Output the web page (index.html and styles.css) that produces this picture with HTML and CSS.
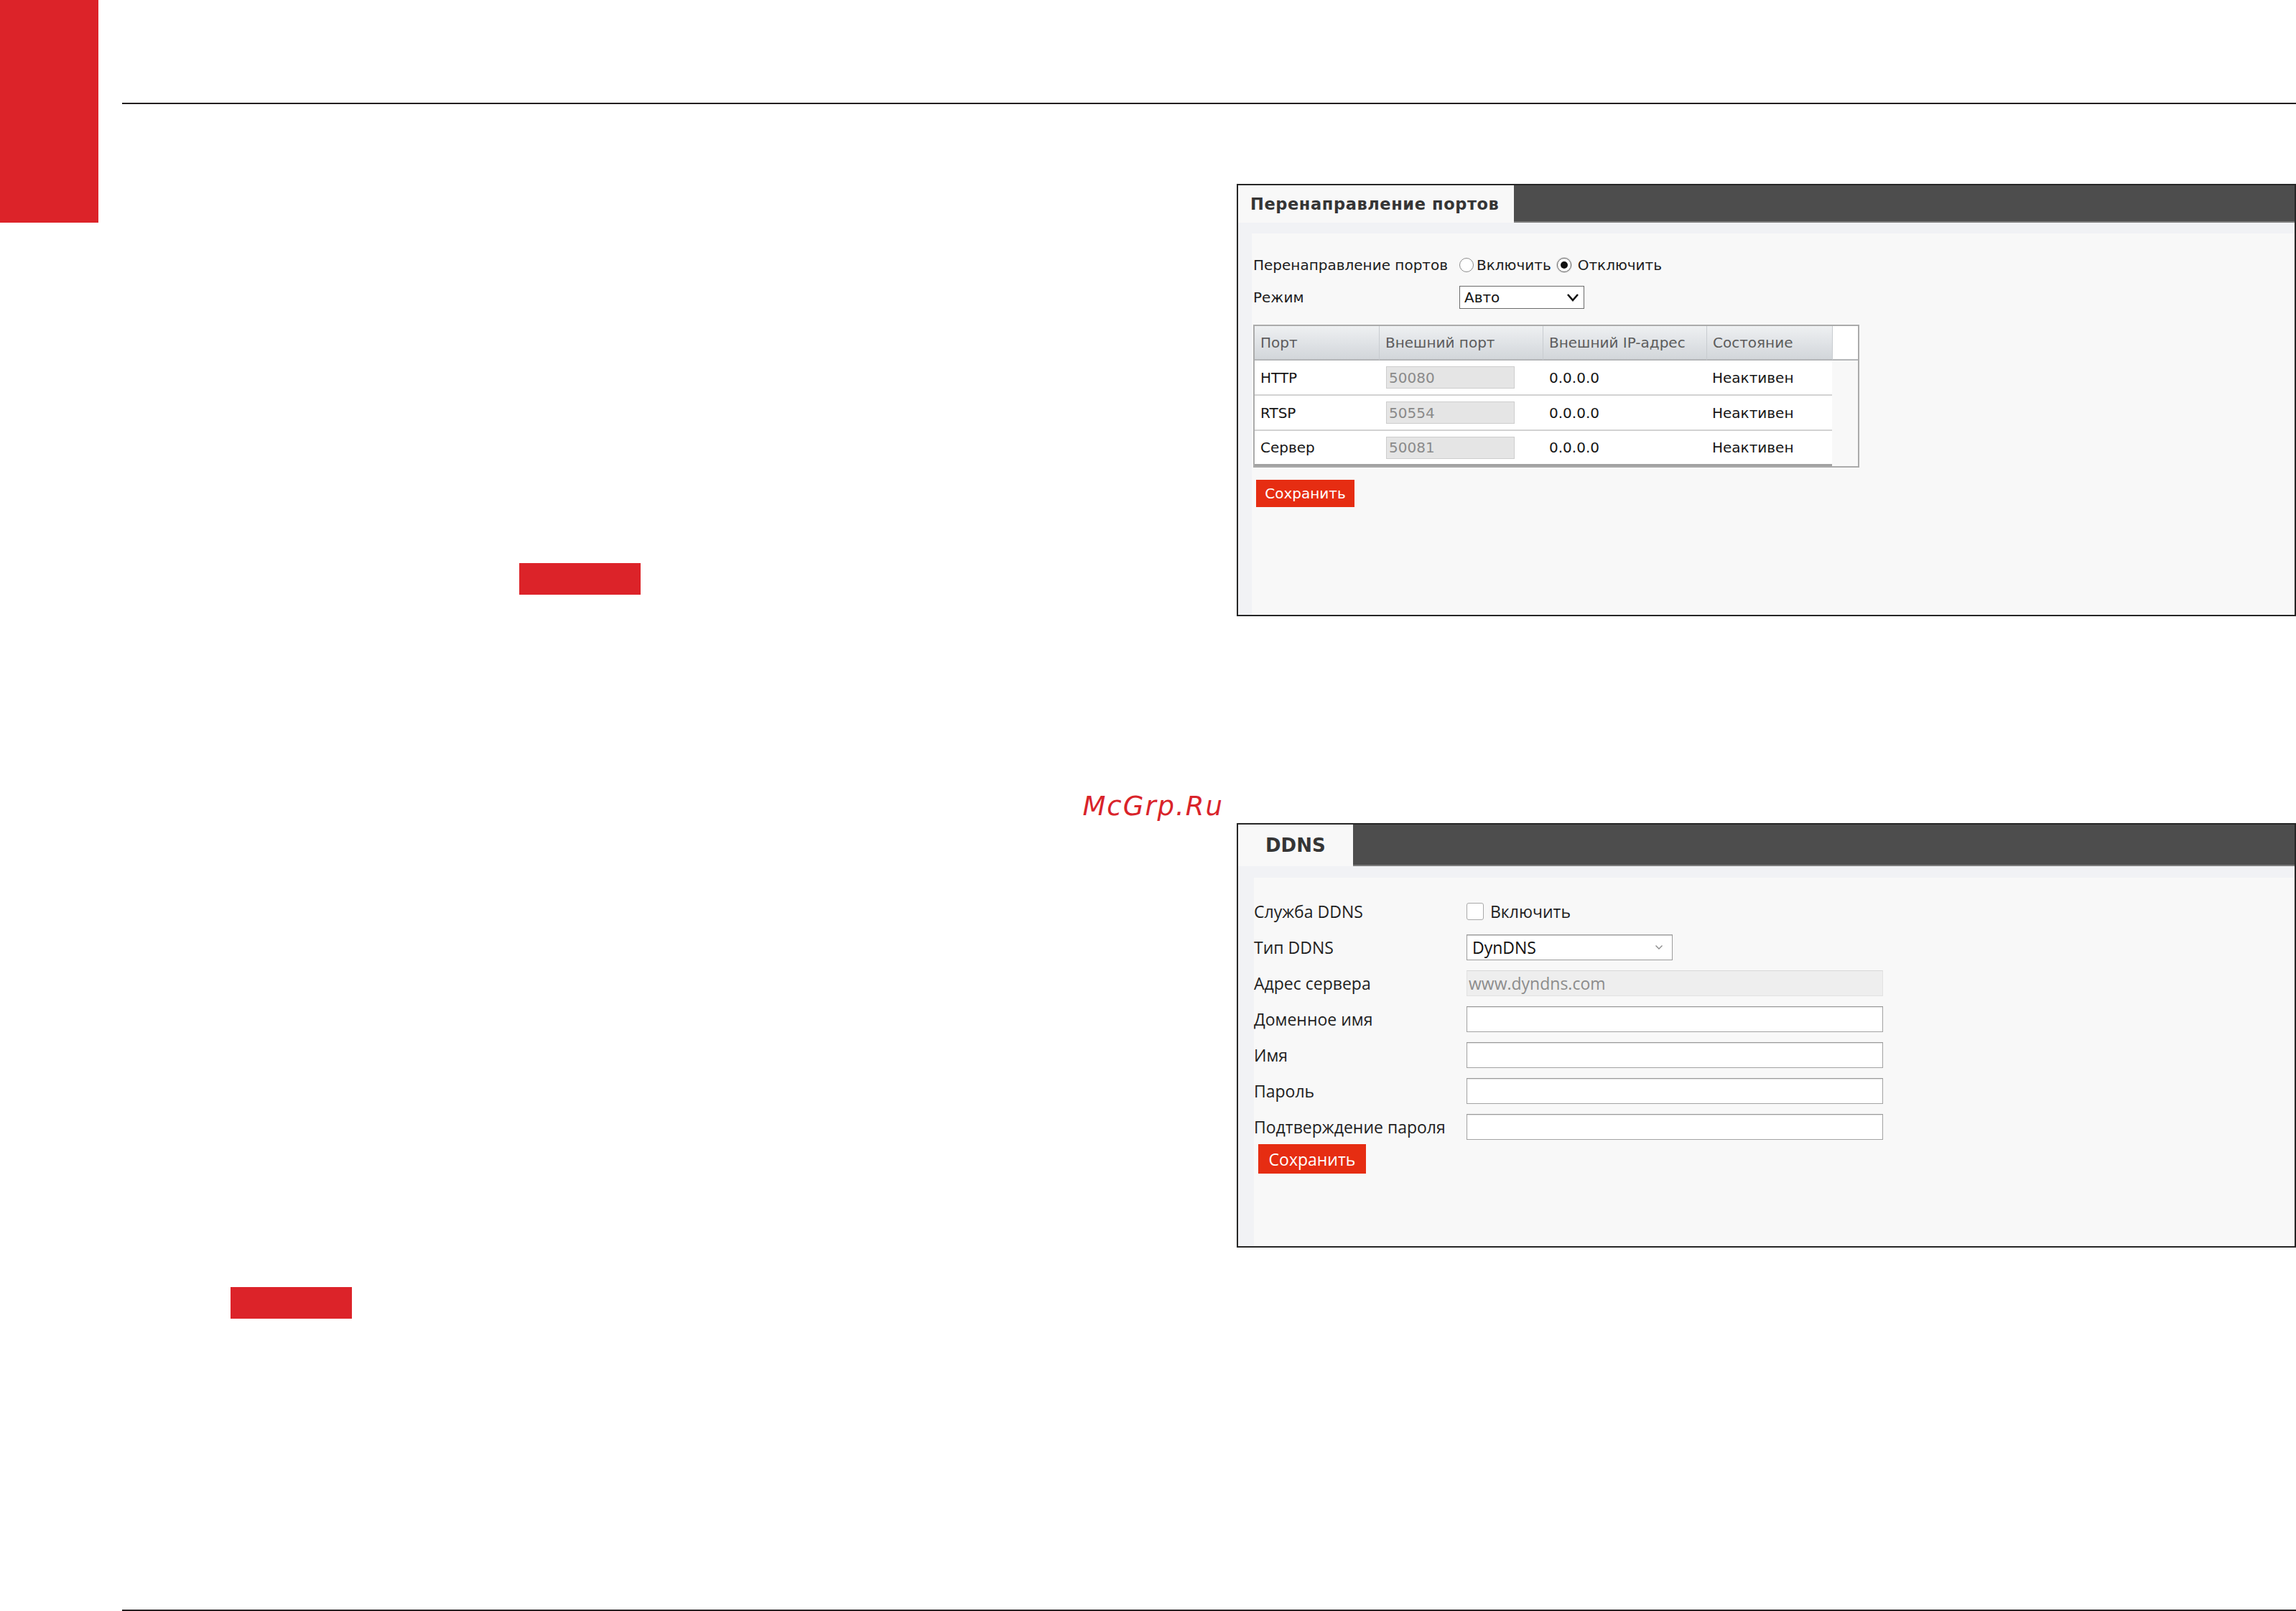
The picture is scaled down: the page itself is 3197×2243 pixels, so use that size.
FILE: index.html
```html
<!DOCTYPE html>
<html lang="ru">
<head>
<meta charset="utf-8">
<title>Перенаправление портов / DDNS</title>
<link rel="stylesheet" href="styles.css">
</head>
<body>
<div class="page">
  <div class="corner"></div>
  <div class="rule rule-top"></div>

  <main class="main">
    <section class="left-col">
      <div class="redact redact-1"></div>
      <div class="watermark">McGrp.Ru</div>
      <div class="redact redact-2"></div>
    </section>

    <section class="right-col">
      <div class="panel panel-ports">
        <div class="panel-head">
          <div class="tab">Перенаправление портов</div>
          <div class="head-bar"></div>
        </div>
        <div class="panel-body">
          <div class="pf-row pf-row-1">
            <span class="pf-label">Перенаправление портов</span>
            <span class="radio"></span>
            <span class="radio-text">Включить</span>
            <span class="radio checked"></span>
            <span class="radio-text">Отключить</span>
          </div>
          <div class="pf-row pf-row-2">
            <span class="pf-label">Режим</span>
            <div class="select-auto">
              <span>Авто</span>
              <svg class="chev-bold" width="18" height="12" viewBox="0 0 18 12"><polyline points="2,2 9,10 16,2" fill="none" stroke="#111" stroke-width="2.6" stroke-linejoin="miter"/></svg>
            </div>
          </div>
          <table class="ports">
            <thead>
              <tr>
                <th class="c1">Порт</th>
                <th class="c2">Внешний порт</th>
                <th class="c3">Внешний IP-адрес</th>
                <th class="c4">Состояние</th>
                <th class="c5"></th>
              </tr>
            </thead>
            <tbody>
              <tr>
                <td class="c1">HTTP</td>
                <td class="c2"><input class="port-input" type="text" value="50080" readonly></td>
                <td class="c3">0.0.0.0</td>
                <td class="c4">Неактивен</td>
                <td class="c5"></td>
              </tr>
              <tr>
                <td class="c1">RTSP</td>
                <td class="c2"><input class="port-input" type="text" value="50554" readonly></td>
                <td class="c3">0.0.0.0</td>
                <td class="c4">Неактивен</td>
                <td class="c5"></td>
              </tr>
              <tr class="last">
                <td class="c1">Сервер</td>
                <td class="c2"><input class="port-input" type="text" value="50081" readonly></td>
                <td class="c3">0.0.0.0</td>
                <td class="c4">Неактивен</td>
                <td class="c5"></td>
              </tr>
            </tbody>
          </table>
          <button class="btn-save btn-save-ports" type="button">Сохранить</button>
        </div>
      </div>

      <div class="panel panel-ddns">
        <div class="panel-head">
          <div class="tab">DDNS</div>
          <div class="head-bar"></div>
        </div>
        <div class="panel-body">
          <div class="dd-row">
            <span class="dd-label">Служба DDNS</span>
            <span class="checkbox"></span>
            <span class="check-text">Включить</span>
          </div>
          <div class="dd-row">
            <span class="dd-label">Тип DDNS</span>
            <div class="select-ddns">
              <span>DynDNS</span>
              <svg class="chev-thin" width="12" height="8" viewBox="0 0 12 8"><polyline points="1.5,1.5 6,6 10.5,1.5" fill="none" stroke="#8a8a8a" stroke-width="1.4"/></svg>
            </div>
          </div>
          <div class="dd-row">
            <span class="dd-label">Адрес сервера</span>
            <input class="dd-input dd-input-disabled" type="text" value="www.dyndns.com" readonly>
          </div>
          <div class="dd-row">
            <span class="dd-label">Доменное имя</span>
            <input class="dd-input" type="text" value="">
          </div>
          <div class="dd-row">
            <span class="dd-label">Имя</span>
            <input class="dd-input" type="text" value="">
          </div>
          <div class="dd-row">
            <span class="dd-label">Пароль</span>
            <input class="dd-input" type="password" value="">
          </div>
          <div class="dd-row">
            <span class="dd-label">Подтверждение пароля</span>
            <input class="dd-input" type="password" value="">
          </div>
          <button class="btn-save btn-save-ddns" type="button">Сохранить</button>
        </div>
      </div>
    </section>
  </main>

  <div class="rule rule-bottom"></div>
</div>
</body>
</html>
```

FILE: styles.css
```css
* { box-sizing: border-box; }

html, body {
  margin: 0;
  padding: 0;
  background: #ffffff;
}

body {
  width: 3197px;
  height: 2243px;
  overflow: hidden;
  font-family: "DejaVu Sans", sans-serif;
}

.page {
  display: grid;
  grid-template-columns: 137px 33px 3027px;
  grid-template-rows: 145px 2096px 2px;
  height: 2243px;
}

.corner {
  grid-column: 1;
  grid-row: 1 / 3;
  align-self: start;
  height: 310px;
  background: #dc2329;
}

.rule { background: #231f20; }

.rule-top {
  grid-column: 3;
  grid-row: 1;
  align-self: end;
  height: 2px;
}

.rule-bottom {
  grid-column: 3;
  grid-row: 3;
}

.main {
  grid-column: 3;
  grid-row: 2;
  display: grid;
  grid-template-columns: 1552px 1475px;
  align-items: start;
}

/* ---------- left column ---------- */
.left-col {
  display: flex;
  flex-direction: column;
  align-items: flex-start;
}

.redact {
  width: 169px;
  height: 44px;
  background: #dc2329;
}

.redact-1 {
  margin-left: 553px;
  margin-top: 639px;
}

.watermark {
  align-self: stretch;
  margin-top: 276px;
  height: 37px;
  padding-right: 18px;
  text-align: right;
  font-family: "DejaVu Sans", sans-serif;
  font-style: italic;
  font-size: 37px;
  line-height: 37px;
  letter-spacing: 2px;
  color: #d9232a;
}

.redact-2 {
  margin-left: 151px;
  margin-top: 651px;
}

/* ---------- panels ---------- */
.right-col {
  display: flex;
  flex-direction: column;
}

.panel {
  border: 2px solid #262626;
  background: #f1f2f5;
  display: flex;
  flex-direction: column;
}

.panel-ports {
  margin-top: 111px;
  height: 602px;
}

.panel-ddns {
  margin-top: 288px;
  height: 591px;
}

.panel-head {
  display: flex;
  flex: none;
}

.panel-ports .panel-head { height: 52px; }
.panel-ddns .panel-head { height: 58px; }

.tab {
  background: #f8f8f8;
  display: flex;
  align-items: center;
  font-family: "DejaVu Sans", sans-serif;
  font-weight: bold;
  color: #353535;
  white-space: nowrap;
}

.panel-ports .tab {
  width: 384px;
  padding-left: 17px;
  font-size: 22.5px;
  letter-spacing: 0.6px;
}

.panel-ddns .tab {
  width: 160px;
  padding-left: 38px;
  font-size: 26px;
}

.head-bar {
  flex: 1;
  background: #4d4d4d;
  box-shadow: inset 0 -2px 0 #7c7c7c;
}

.panel-body {
  flex: 1;
  background: #f8f8f8;
}

.panel-ports .panel-body {
  margin: 15px 0 0 19px;
  padding: 22px 0 0 2px;
  font-family: "DejaVu Sans", sans-serif;
  font-size: 20px;
  color: #1c1c1c;
}

.panel-ddns .panel-body {
  margin: 16px 0 0 22px;
  padding: 22px 0 0 0;
  font-family: "Open Sans", sans-serif;
  font-size: 23px;
  color: #1f1f1f;
}

/* ---------- port forwarding form ---------- */
.pf-row {
  display: flex;
  align-items: center;
  white-space: nowrap;
}

.pf-row-1 { height: 44px; }
.pf-row-2 { height: 46px; }

.pf-label {
  width: 287px;
  flex: none;
}

.radio {
  position: relative;
  width: 20px;
  height: 20px;
  flex: none;
  border-radius: 50%;
  border: 1px solid #8c8c8c;
  background: #ffffff;
  margin-right: 4px;
}

.radio.checked {
  border-color: #6a6a6a;
  box-shadow: 0 0 0 1px #d6d6d6;
  margin-left: 8px;
  margin-right: 9px;
}

.radio.checked::after {
  content: "";
  position: absolute;
  left: 4px;
  top: 4px;
  width: 10px;
  height: 10px;
  border-radius: 50%;
  background: #111111;
}

.select-auto {
  width: 174px;
  height: 32px;
  border: 1px solid #6b6b6b;
  background: #ffffff;
  display: flex;
  align-items: center;
  justify-content: space-between;
  padding: 0 6px 0 6px;
  color: #111;
}

.chev-bold { display: block; }

/* ---------- ports table ---------- */
.ports {
  border-collapse: separate;
  border-spacing: 0;
  table-layout: fixed;
  width: 844px;
  margin-top: 15px;
  border: 2px solid #ababab;
}

.ports th,
.ports td {
  padding: 0;
  text-align: left;
  white-space: nowrap;
  vertical-align: middle;
}

.ports .c1 { width: 173px; padding-left: 8px; }
.ports .c2 { width: 228px; padding-left: 9px; }
.ports .c3 { width: 228px; padding-left: 9px; }
.ports .c4 { width: 175px; padding-left: 8px; }
.ports .c5 { width: 36px; }

.ports th {
  height: 48px;
  font-weight: normal;
  color: #5c5c5c;
  background: linear-gradient(#eef0f2, #d2d6da);
  border-bottom: 2px solid #b4b6b8;
}

.ports th + th { border-left: 1px solid #c8ccd0; }
.ports th.c2, .ports th.c3 { padding-left: 8px; }

.ports th.c5 {
  background: #ffffff;
  border-bottom: 2px solid #b4b6b8;
}

.ports td {
  height: 49px;
  background: #ffffff;
  color: #161616;
  border-bottom: 2px solid #d2d2d2;
}

.ports tr.last td { border-bottom: 3px solid #a2a2a2; }

.ports td.c5,
.ports tr.last td.c5 {
  background: #f8f8f8;
  border-bottom: none;
}

.port-input {
  display: block;
  width: 179px;
  height: 31px;
  margin: 0 0 0 1px;
  padding: 0 0 0 3px;
  border: 1px solid #cdcdcd;
  background: #e5e5e5;
  color: #8a8a8a;
  font-family: "DejaVu Sans", sans-serif;
  font-size: 20px;
  outline: none;
}

/* ---------- buttons ---------- */
.btn-save {
  display: flex;
  align-items: center;
  justify-content: center;
  border: none;
  padding: 0;
  background: #e62d12;
  color: #ffffff;
  cursor: pointer;
}

.btn-save-ports {
  width: 137px;
  height: 38px;
  margin: 17px 0 0 4px;
  font-family: "DejaVu Sans", sans-serif;
  font-size: 20px;
}

.btn-save-ddns {
  width: 150px;
  height: 41px;
  margin: -1px 0 0 6px;
  font-family: "Open Sans", sans-serif;
  font-size: 23px;
}

/* ---------- DDNS form ---------- */
.dd-row {
  display: flex;
  align-items: center;
  height: 50px;
  white-space: nowrap;
}

.dd-label {
  width: 296px;
  flex: none;
}

.checkbox {
  width: 24px;
  height: 24px;
  flex: none;
  border: 1px solid #a9a9a9;
  border-radius: 3px;
  background: #ffffff;
  margin-right: 9px;
}

.select-ddns {
  width: 287px;
  height: 36px;
  border: 1px solid #9c9c9c;
  box-shadow: inset 0 1px 0 #d0d0d0;
  background: #ffffff;
  display: flex;
  align-items: center;
  justify-content: space-between;
  padding: 0 12px 0 7px;
  color: #111;
}

.chev-thin { display: block; }

.dd-input {
  width: 580px;
  height: 36px;
  margin: 0;
  padding: 0 0 0 2px;
  border: 1px solid #a3a3a3;
  border-top-color: #999999;
  box-shadow: inset 0 1px 1px rgba(0, 0, 0, 0.12);
  background: #ffffff;
  font-family: "Open Sans", sans-serif;
  font-size: 23px;
  color: #1f1f1f;
  outline: none;
}

.dd-input-disabled {
  background: #eeeeee;
  border-color: #e2e2e2;
  border-top-color: #d8d8d8;
  box-shadow: none;
  color: #8c8c8c;
}
```
